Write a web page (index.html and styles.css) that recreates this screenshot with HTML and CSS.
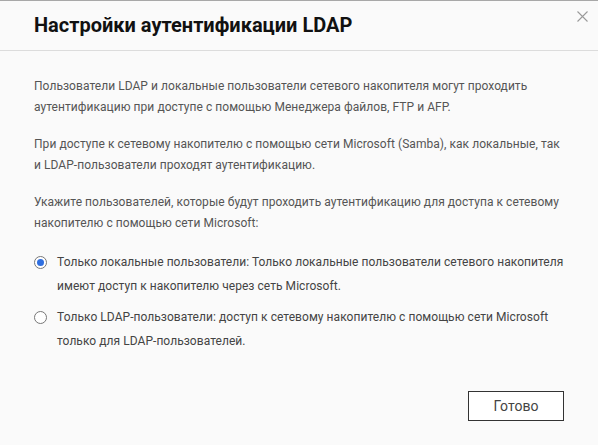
FILE: index.html
```html
<!DOCTYPE html>
<html lang="ru">
<head>
<meta charset="UTF-8">
<title>Настройки аутентификации LDAP</title>
<link rel="stylesheet" href="styles.css">
</head>
<body>
  <div class="dialog">
    <div class="header">
      <h1>Настройки аутентификации LDAP</h1>
      <span class="close">
        <svg width="11" height="11" viewBox="0 0 11 11"><path d="M0.5 0.5L10.5 10.5M10.5 0.5L0.5 10.5" stroke="#9a9a9a" stroke-width="1.1" fill="none"/></svg>
      </span>
    </div>
    <div class="content">
      <p>Пользователи LDAP и локальные пользователи сетевого накопителя могут проходить аутентификацию при доступе с помощью Менеджера файлов, FTP и AFP.</p>
      <p>При доступе к сетевому накопителю с помощью сети Microsoft (Samba), как локальные, так и LDAP-пользователи проходят аутентификацию.</p>
      <p>Укажите пользователей, которые будут проходить аутентификацию для доступа к сетевому накопителю с помощью сети Microsoft:</p>
      <div class="options">
        <label class="option">
          <span class="radio checked"></span>
          <span class="option-text">Только локальные пользователи: Только локальные пользователи сетевого накопителя имеют доступ к накопителю через сеть Microsoft.</span>
        </label>
        <label class="option">
          <span class="radio"></span>
          <span class="option-text">Только LDAP-пользователи: доступ к сетевому накопителю с помощью сети Microsoft только для LDAP-пользователей.</span>
        </label>
      </div>
    </div>
    <div class="footer">
      <button>Готово</button>
    </div>
  </div>
</body>
</html>
```

FILE: styles.css
```css
body {
  margin: 0;
  font-family: Roboto, "Liberation Sans", sans-serif;
  background-color: #fafafa;
}
.dialog {
  width: 598px;
  height: 445px;
  box-sizing: border-box;
  border-top: 1px solid #a8a8a8;
  background-color: #fafafa;
  display: flex;
  flex-direction: column;
}
.header {
  height: 50px;
  border-bottom: 1px solid #dcdcdc;
  display: flex;
  align-items: center;
  justify-content: space-between;
  padding: 0 10px 0 34px;
  box-sizing: border-box;
}
h1 {
  margin: 0;
  font-size: 20px;
  font-weight: bold;
  color: #111111;
  padding-bottom: 2px;
}
.close {
  align-self: flex-start;
  margin-top: 10px;
  width: 11px;
  height: 11px;
  display: block;
}
.close svg {
  display: block;
}
.content {
  padding: 25px 34px 0 34px;
  flex: 1;
}
p {
  margin: 0 0 16px 0;
  font-size: 12px;
  line-height: 21px;
  color: #555555;
  letter-spacing: 0.05px;
}
.option {
  display: flex;
  align-items: flex-start;
  margin-bottom: 7px;
}
.radio {
  width: 11px;
  height: 11px;
  border: 1px solid #777777;
  border-radius: 50%;
  flex-shrink: 0;
  margin-top: 6px;
  margin-right: 10px;
  display: flex;
  align-items: center;
  justify-content: center;
  background: #ffffff;
}
.radio.checked::after {
  content: "";
  width: 7px;
  height: 7px;
  border-radius: 50%;
  background-color: #2f6fe0;
}
.option-text {
  font-size: 12px;
  line-height: 24px;
  color: #444444;
  letter-spacing: 0.05px;
}
.footer {
  display: flex;
  justify-content: flex-end;
  padding: 0 34px 24px 0;
}
button {
  width: 96px;
  height: 30px;
  background-color: #ffffff;
  border: 1.5px solid #333333;
  font-family: Roboto, "Liberation Sans", sans-serif;
  font-size: 14px;
  color: #444444;
  cursor: pointer;
}
```
